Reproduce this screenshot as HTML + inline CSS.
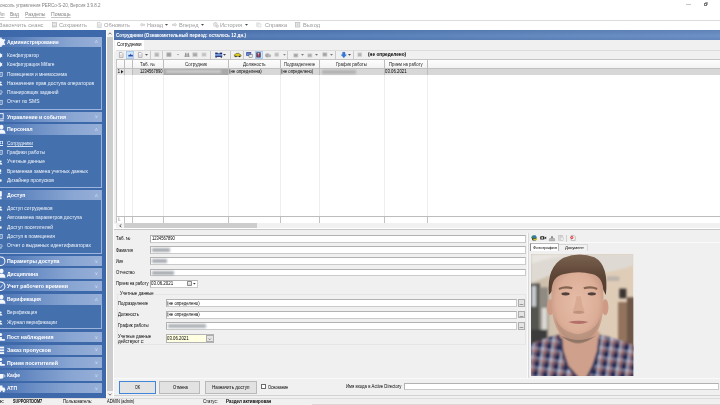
<!DOCTYPE html>
<html lang="ru"><head><meta charset="utf-8"><title>PERCo-S-20</title>
<style>
html,body{margin:0;padding:0;}
body{width:720px;height:405px;overflow:hidden;background:#fff;position:relative;font-family:"Liberation Sans", sans-serif;}
#app{position:absolute;left:0;top:0;width:720px;height:405px;overflow:hidden;}
#app div{position:absolute;box-sizing:border-box;}
#app span.t{position:absolute;white-space:nowrap;transform-origin:0 50%;line-height:1;display:block;}
#app svg{position:absolute;overflow:visible;}
</style></head><body><div id="app">
<div style="left:0px;top:19.5px;width:720px;height:1px;background:#dcdcdc;"></div>
<div style="left:686.3px;top:4px;width:4.4px;height:0.7px;background:#c4c4c4;"></div>
<div style="left:704.9px;top:1.9px;width:3.3px;height:3.2px;border:0.6px solid #aaa;"></div>
<div style="left:704px;top:2.7px;width:3.3px;height:3.3px;border:0.7px solid #7a7a7a;background:#fff;"></div>
<div style="left:0px;top:30px;width:105.9px;height:367.6px;background:#3d69aa;"></div>
<div style="left:105.9px;top:30px;width:8.5px;height:368px;background:#fff;"></div>
<div style="left:107.4px;top:30px;width:5.2px;height:368px;background:#f3f3f3;"></div>
<div style="left:107.4px;top:37px;width:5.2px;height:353.7px;background:#cdcdcd;"></div>
<div style="left:0px;top:47px;width:101.9px;height:62.599999999999994px;border:0.7px solid #9db5dc;border-left:none;border-top:none;background:#4470ae;"></div>
<div style="left:0px;top:36.65px;width:101.9px;height:10.4px;background:linear-gradient(90deg,#4b74b4 0%,#6c8fc5 35%,#89a5d2 70%,#96afd8 100%);"></div>
<div style="left:0px;top:111.5px;width:101.9px;height:10.4px;background:linear-gradient(90deg,#4b74b4 0%,#6c8fc5 35%,#89a5d2 70%,#96afd8 100%);"></div>
<div style="left:0px;top:134.6px;width:101.9px;height:53.099999999999994px;border:0.7px solid #9db5dc;border-left:none;border-top:none;background:#4470ae;"></div>
<div style="left:0px;top:124.2px;width:101.9px;height:10.4px;background:linear-gradient(90deg,#4b74b4 0%,#6c8fc5 35%,#89a5d2 70%,#96afd8 100%);"></div>
<div style="left:0px;top:200.4px;width:101.9px;height:53.29999999999998px;border:0.7px solid #9db5dc;border-left:none;border-top:none;background:#4470ae;"></div>
<div style="left:0px;top:189.95000000000002px;width:101.9px;height:10.4px;background:linear-gradient(90deg,#4b74b4 0%,#6c8fc5 35%,#89a5d2 70%,#96afd8 100%);"></div>
<div style="left:0px;top:255.85000000000002px;width:101.9px;height:10.4px;background:linear-gradient(90deg,#4b74b4 0%,#6c8fc5 35%,#89a5d2 70%,#96afd8 100%);"></div>
<div style="left:0px;top:268.45px;width:101.9px;height:10.4px;background:linear-gradient(90deg,#4b74b4 0%,#6c8fc5 35%,#89a5d2 70%,#96afd8 100%);"></div>
<div style="left:0px;top:281.0px;width:101.9px;height:10.4px;background:linear-gradient(90deg,#4b74b4 0%,#6c8fc5 35%,#89a5d2 70%,#96afd8 100%);"></div>
<div style="left:0px;top:304.6px;width:101.9px;height:24.899999999999977px;border:0.7px solid #9db5dc;border-left:none;border-top:none;background:#4470ae;"></div>
<div style="left:0px;top:294.25px;width:101.9px;height:10.4px;background:linear-gradient(90deg,#4b74b4 0%,#6c8fc5 35%,#89a5d2 70%,#96afd8 100%);"></div>
<div style="left:0px;top:331.8px;width:101.9px;height:10.4px;background:linear-gradient(90deg,#4b74b4 0%,#6c8fc5 35%,#89a5d2 70%,#96afd8 100%);"></div>
<div style="left:0px;top:344.5px;width:101.9px;height:10.4px;background:linear-gradient(90deg,#4b74b4 0%,#6c8fc5 35%,#89a5d2 70%,#96afd8 100%);"></div>
<div style="left:0px;top:357.40000000000003px;width:101.9px;height:10.4px;background:linear-gradient(90deg,#4b74b4 0%,#6c8fc5 35%,#89a5d2 70%,#96afd8 100%);"></div>
<div style="left:0px;top:370.2px;width:101.9px;height:10.4px;background:linear-gradient(90deg,#4b74b4 0%,#6c8fc5 35%,#89a5d2 70%,#96afd8 100%);"></div>
<div style="left:0px;top:383.05px;width:101.9px;height:10.4px;background:linear-gradient(90deg,#4b74b4 0%,#6c8fc5 35%,#89a5d2 70%,#96afd8 100%);"></div>
<svg style="left:108px;top:32.2px" width="4" height="3" viewBox="0 0 4 3"><path d="M0.5 2.4 L2 0.8 L3.5 2.4" fill="none" stroke="#555" stroke-width="0.8"/></svg>
<svg style="left:108px;top:393px" width="4" height="3" viewBox="0 0 4 3"><path d="M0.5 0.6 L2 2.2 L3.5 0.6" fill="none" stroke="#555" stroke-width="0.8"/></svg>
<div style="left:114.2px;top:30px;width:605.8px;height:9.8px;background:linear-gradient(180deg,rgba(0,0,0,.06),rgba(255,255,255,.05) 60%,rgba(0,0,0,.04)),linear-gradient(90deg,#4a71b0 0%,#577fba 50%,#668cc3 100%);"></div>
<div style="left:114.2px;top:39.8px;width:605.8px;height:9.8px;background:#f0f0f0;"></div>
<div style="left:114.6px;top:39.8px;width:29.6px;height:9.8px;background:#fff;"></div>
<div style="left:114.2px;top:49.5px;width:605.8px;height:10px;background:#f0f0f0;border-top:0.8px solid #fdfdfd;"></div>
<div style="left:116.2px;top:50.3px;width:603.8px;height:0.6px;background:#dcdcdc;"></div>
<div style="left:114.4px;top:59.4px;width:605.6px;height:165px;background:#f0f0f0;"></div>
<div style="left:116.2px;top:59.4px;width:603.8px;height:164.5px;background:#fff;"></div>
<div style="left:116.2px;top:59.4px;width:603.8px;height:9.2px;background:linear-gradient(180deg,#fdfdfd,#f3f3f3);border-top:0.7px solid #c4c4c4;border-bottom:0.7px solid #c0c0c0;"></div>
<div style="left:116.2px;top:68.6px;width:603.8px;height:6.3px;background:#d7d7d7;"></div>
<div style="left:116.2px;top:68.6px;width:16.2px;height:6.3px;background:#e4e4e4;"></div>
<div style="left:124.45px;top:59.8px;width:0.7px;height:163px;background:#eeeeee;"></div>
<div style="left:124.45px;top:215.6px;width:0.7px;height:7px;background:#c2c2c2;"></div>
<div style="left:124.45px;top:59.8px;width:0.7px;height:15px;background:#bdbdbd;"></div>
<div style="left:132.1px;top:59.8px;width:0.7px;height:163px;background:#eeeeee;"></div>
<div style="left:132.1px;top:215.6px;width:0.7px;height:7px;background:#c2c2c2;"></div>
<div style="left:132.1px;top:59.8px;width:0.7px;height:15px;background:#bdbdbd;"></div>
<div style="left:163.0px;top:59.8px;width:0.7px;height:163px;background:#eeeeee;"></div>
<div style="left:163.0px;top:215.6px;width:0.7px;height:7px;background:#c2c2c2;"></div>
<div style="left:163.0px;top:59.8px;width:0.7px;height:15px;background:#bdbdbd;"></div>
<div style="left:227.89999999999998px;top:59.8px;width:0.7px;height:163px;background:#eeeeee;"></div>
<div style="left:227.89999999999998px;top:215.6px;width:0.7px;height:7px;background:#c2c2c2;"></div>
<div style="left:227.89999999999998px;top:59.8px;width:0.7px;height:15px;background:#bdbdbd;"></div>
<div style="left:279.7px;top:59.8px;width:0.7px;height:163px;background:#eeeeee;"></div>
<div style="left:279.7px;top:215.6px;width:0.7px;height:7px;background:#c2c2c2;"></div>
<div style="left:279.7px;top:59.8px;width:0.7px;height:15px;background:#bdbdbd;"></div>
<div style="left:318.9px;top:59.8px;width:0.7px;height:163px;background:#eeeeee;"></div>
<div style="left:318.9px;top:215.6px;width:0.7px;height:7px;background:#c2c2c2;"></div>
<div style="left:318.9px;top:59.8px;width:0.7px;height:15px;background:#bdbdbd;"></div>
<div style="left:384.2px;top:59.8px;width:0.7px;height:163px;background:#eeeeee;"></div>
<div style="left:384.2px;top:215.6px;width:0.7px;height:7px;background:#c2c2c2;"></div>
<div style="left:384.2px;top:59.8px;width:0.7px;height:15px;background:#bdbdbd;"></div>
<div style="left:427.2px;top:59.8px;width:0.7px;height:163px;background:#eeeeee;"></div>
<div style="left:427.2px;top:215.6px;width:0.7px;height:7px;background:#c2c2c2;"></div>
<div style="left:427.2px;top:59.8px;width:0.7px;height:15px;background:#bdbdbd;"></div>
<svg style="left:121px;top:69.9px" width="2.4" height="3.4" viewBox="0 0 2.4 3.4"><path d="M0 0 L2.4 1.7 L0 3.4 Z" fill="#222"/></svg>
<div style="left:163.6px;top:68.6px;width:64.5px;height:6.3px;background:#a9a9a9;"></div>
<div style="left:166px;top:70.3px;width:55px;height:3.2px;background:#d6d6d6;filter:blur(0.9px);opacity:.8;"></div>
<div style="left:322px;top:69.8px;width:34px;height:4px;background:#a3a3a3;filter:blur(1.3px);opacity:.7;"></div>
<div style="left:116.2px;top:215.5px;width:603.8px;height:0.7px;background:#bcbcbc;"></div>
<div style="left:116.1px;top:59.4px;width:0.6px;height:169px;background:#c6c6c6;"></div>
<div style="left:116.2px;top:222.7px;width:603.8px;height:5.8px;background:#f1f1f1;"></div>
<div style="left:124.2px;top:222.9px;width:132.8px;height:5.4px;background:#cdcdcd;"></div>
<svg style="left:118.6px;top:223.9px" width="3" height="3.6" viewBox="0 0 3 3.6"><path d="M2.4 0.4 L0.7 1.8 L2.4 3.2" fill="none" stroke="#333" stroke-width="0.8"/></svg>
<div style="left:114.4px;top:228.6px;width:605.6px;height:1.2px;background:#c6c6c6;"></div>
<div style="left:114.4px;top:229.8px;width:605.6px;height:3px;background:#f4f4f4;"></div>
<div style="left:114.4px;top:232.6px;width:605.6px;height:0.7px;background:#dadada;"></div>
<div style="left:114.4px;top:229.8px;width:605.6px;height:168.2px;background:#f0f0f0;"></div>
<div style="left:149.8px;top:235.1px;width:375.8px;height:7.6px;background:#fff;border:0.7px solid #cacaca;border-top-color:#b2b2b2;border-left-color:#b2b2b2;"></div>
<div style="left:149.8px;top:246.29999999999998px;width:375.8px;height:7.6px;background:#fff;border:0.7px solid #cacaca;border-top-color:#b2b2b2;border-left-color:#b2b2b2;"></div>
<div style="left:152px;top:248px;width:18px;height:4.2px;background:#8f949c;filter:blur(1.1px);opacity:.75;"></div>
<div style="left:149.8px;top:257.4px;width:375.8px;height:7.6px;background:#fff;border:0.7px solid #cacaca;border-top-color:#b2b2b2;border-left-color:#b2b2b2;"></div>
<div style="left:152px;top:259.2px;width:15px;height:4.2px;background:#8f949c;filter:blur(1.1px);opacity:.75;"></div>
<div style="left:149.8px;top:268.79999999999995px;width:375.8px;height:7.6px;background:#fff;border:0.7px solid #cacaca;border-top-color:#b2b2b2;border-left-color:#b2b2b2;"></div>
<div style="left:152px;top:270.6px;width:22px;height:4.2px;background:#8f949c;filter:blur(1.1px);opacity:.75;"></div>
<div style="left:149.8px;top:279.75px;width:48.0px;height:7.9px;background:#fff;border:0.7px solid #cacaca;border-top-color:#b2b2b2;border-left-color:#b2b2b2;"></div>
<div style="left:187.4px;top:280.9px;width:4.2px;height:5.6px;background:linear-gradient(180deg,#f4f4f4,#d4d4d4);border:0.6px solid #8a8a8a;border-radius:0.8px;"></div>
<svg style="left:193.05px;top:283.28px" width="2.7" height="1.62" viewBox="0 0 3 1.8"><path d="M0 0 L3 0 L1.5 1.8 Z" fill="#333"/></svg>
<div style="left:116.7px;top:293.5px;width:409.5px;height:51.8px;border:0.6px solid #e6e6e6;"></div>
<div style="left:119.5px;top:291px;width:35.5px;height:5px;background:#f0f0f0;"></div>
<div style="left:165.9px;top:299.2px;width:351px;height:8px;background:#fff;border:0.7px solid #cacaca;border-top-color:#b2b2b2;border-left-color:#b2b2b2;"></div>
<div style="left:517.7px;top:299.4px;width:7.4px;height:7.6px;background:#e4e4e4;border:0.6px solid #adadad;"></div>
<div style="left:165.9px;top:310.6px;width:351px;height:8px;background:#fff;border:0.7px solid #cacaca;border-top-color:#b2b2b2;border-left-color:#b2b2b2;"></div>
<div style="left:517.7px;top:310.8px;width:7.4px;height:7.6px;background:#e4e4e4;border:0.6px solid #adadad;"></div>
<div style="left:165.9px;top:321.9px;width:351px;height:8px;background:#fff;border:0.7px solid #cacaca;border-top-color:#b2b2b2;border-left-color:#b2b2b2;"></div>
<div style="left:517.7px;top:322.09999999999997px;width:7.4px;height:7.6px;background:#e4e4e4;border:0.6px solid #adadad;"></div>
<div style="left:167.5px;top:323.8px;width:38px;height:4.2px;background:#8f949c;filter:blur(1.1px);opacity:.7;"></div>
<div style="left:165.9px;top:334.4px;width:48.1px;height:8.3px;background:#ffffe1;border:0.7px solid #b4b4b4;"></div>
<div style="left:206.1px;top:334.9px;width:7.5px;height:7.3px;background:#e4e4e4;border:0.6px solid #adadad;"></div>
<svg style="left:208.2px;top:337.7px" width="3.4" height="2.4" viewBox="0 0 3.4 2.4"><path d="M0.4 0.5 L1.7 1.8 L3 0.5" fill="none" stroke="#555" stroke-width="0.6"/></svg>
<div style="left:527.2px;top:233px;width:0.6px;height:145px;background:#fbfbfb;"></div>
<div style="left:527.8px;top:233px;width:0.6px;height:145px;background:#d9d9d9;"></div>
<div style="left:530.4px;top:243.1px;width:29px;height:8.2px;background:#fff;border:0.7px solid #b9b9b9;border-left-color:#8c8c8c;border-bottom:none;"></div>
<div style="left:559.4px;top:244px;width:29px;height:7.3px;border:0.6px solid #d8d8d8;border-left:none;border-bottom:none;background:#f1f1f1;"></div>
<div style="left:528.5px;top:242.3px;width:191.5px;height:0.6px;background:#fafafa;"></div>
<div style="left:114.4px;top:377.6px;width:605.6px;height:0.7px;background:#dadada;"></div>
<div style="left:114.4px;top:378.3px;width:605.6px;height:0.6px;background:#fafafa;"></div>
<div style="left:118.7px;top:380.6px;width:37.5px;height:13.2px;background:#e3e3e3;border:1px solid #3f86d8;"></div>
<div style="left:159.4px;top:380.6px;width:41.1px;height:13.2px;background:#e2e2e2;border:0.7px solid #b9b9b9;"></div>
<div style="left:204.5px;top:380.6px;width:52px;height:13.2px;background:#e2e2e2;border:0.7px solid #b9b9b9;"></div>
<div style="left:261px;top:384.2px;width:5px;height:5.2px;background:#fff;border:0.6px solid #6a6a6a;"></div>
<div style="left:404.4px;top:382.6px;width:314.6px;height:7.8px;background:#fff;border:0.7px solid #cacaca;border-top-color:#b2b2b2;border-left-color:#b2b2b2;"></div>
<div style="left:114.2px;top:395.2px;width:605.8px;height:0.7px;background:#d2d2d2;"></div>
<div style="left:0px;top:398px;width:720px;height:7px;background:#f0f0f0;border-top:0.6px solid #dcdcdc;"></div>
<div style="left:312px;top:404.3px;width:408px;height:0.7px;background:#e0d6d6;"></div>
<svg style="left:51.8px;top:22.3px" width="5" height="5.4" viewBox="0 0 5 5.4"><rect x="0.4" y="0.4" width="4.2" height="4.6" fill="#f2f2f2" stroke="#b9b9b9" stroke-width="0.7"/><rect x="1.3" y="0.6" width="2.4" height="1.6" fill="#d9d9d9"/><rect x="1.2" y="3.2" width="2.6" height="1.6" fill="#cfcfcf"/></svg>
<svg style="left:97.2px;top:22.1px" width="4.6" height="5.8" viewBox="0 0 4.6 5.8"><path d="M0.4 0.4 H3 L4.2 1.6 V5.4 H0.4 Z" fill="#f6f6f6" stroke="#b9b9b9" stroke-width="0.6"/><path d="M1.2 2.4 H3.4 M1.2 3.4 H3.4 M1.2 4.4 H3.4" stroke="#cfcfcf" stroke-width="0.5"/></svg>
<svg style="left:139.5px;top:23.2px" width="5" height="3.6" viewBox="0 0 5 3.6"><path d="M0.3 1.8 L2 0.3 V1.2 H4.7 V2.4 H2 V3.3 Z" fill="#e9e9e9" stroke="#b9b9b9" stroke-width="0.5"/></svg>
<svg style="left:165.2px;top:24.2px" width="3.0" height="1.8" viewBox="0 0 3 1.8"><path d="M0 0 L3 0 L1.5 1.8 Z" fill="#444"/></svg>
<svg style="left:172px;top:23.2px" width="5" height="3.6" viewBox="0 0 5 3.6"><path d="M4.7 1.8 L3 0.3 V1.2 H0.3 V2.4 H3 V3.3 Z" fill="#e9e9e9" stroke="#b9b9b9" stroke-width="0.5"/></svg>
<svg style="left:200.8px;top:24.2px" width="3.0" height="1.8" viewBox="0 0 3 1.8"><path d="M0 0 L3 0 L1.5 1.8 Z" fill="#444"/></svg>
<svg style="left:212.6px;top:22.2px" width="5.6" height="5.6" viewBox="0 0 5.6 5.6"><circle cx="2.4" cy="2.4" r="1.9" fill="#f4f4f4" stroke="#b9b9b9" stroke-width="0.6"/><path d="M2.4 1.3 V2.5 H3.3" stroke="#b9b9b9" stroke-width="0.5" fill="none"/><rect x="3" y="3.3" width="2.3" height="2" fill="#e4e4e4" stroke="#b9b9b9" stroke-width="0.4"/></svg>
<svg style="left:244.5px;top:24.2px" width="3.0" height="1.8" viewBox="0 0 3 1.8"><path d="M0 0 L3 0 L1.5 1.8 Z" fill="#444"/></svg>
<svg style="left:256.2px;top:22.4px" width="5.4" height="5.2" viewBox="0 0 5.4 5.2"><path d="M0.4 0.8 H3.2 V4.4 H0.4 Z" fill="#f1f1f1" stroke="#d0d0d0" stroke-width="0.5"/><path d="M2 1.8 H5 V5 H2 Z" fill="#f6f6f6" stroke="#cccccc" stroke-width="0.5"/></svg>
<svg style="left:295.2px;top:22.3px" width="5.2" height="5.4" viewBox="0 0 5.2 5.4"><rect x="0.4" y="0.4" width="4.4" height="4.6" fill="#f0f0f0" stroke="#b9b9b9" stroke-width="0.7"/><rect x="1.6" y="1.2" width="2" height="3" fill="#d5d5d5"/></svg>
<svg style="left:119.3px;top:52.0px" width="4.4" height="5.8" viewBox="0 0 4.4 5.8"><path d="M0.4 0.4 H2.8 L4 1.6 V5.4 H0.4 Z" fill="#fafafa" stroke="#8a8a8a" stroke-width="0.6"/><path d="M1.2 3 H3.2 M1.2 4.1 H3.2" stroke="#a5a5a5" stroke-width="0.5"/></svg>
<div style="left:126.2px;top:50.6px;width:8.2px;height:8.6px;background:#d3e6f7;border:0.5px solid #a9cbee;"></div>
<svg style="left:127.8px;top:52.8px" width="5.2" height="4" viewBox="0 0 5.2 4"><path d="M0.3 3.2 L0.3 2.2 L1.2 1.4 L1.9 2.2 L2.8 0.5 L3.6 2.2 L4.2 1.4 L4.9 2.4 V3.2 Z" fill="#2446a4"/><path d="M0.2 3.7 H5" stroke="#3a5cb8" stroke-width="0.4"/></svg>
<svg style="left:138.0px;top:52.0px" width="4.4" height="5.8" viewBox="0 0 4.4 5.8"><path d="M0.4 0.4 H2.8 L4 1.6 V5.4 H0.4 Z" fill="#fafafa" stroke="#8a8a8a" stroke-width="0.6"/><path d="M1.2 3 H3.2 M1.2 4.1 H3.2" stroke="#a5a5a5" stroke-width="0.5"/></svg>
<svg style="left:145.2px;top:54.1px" width="3.0" height="1.8" viewBox="0 0 3 1.8"><path d="M0 0 L3 0 L1.5 1.8 Z" fill="#555"/></svg>
<div style="left:150.29999999999998px;top:51px;width:0.7px;height:8px;background:#c9c9c9;"></div>
<svg style="left:153.89999999999998px;top:52.199999999999996px" width="5.6" height="5.4" viewBox="0 0 5.6 5.4"><rect x="0.3" y="0.3" width="5.0" height="4.800000000000001" rx="0.6" fill="#d2d2d2"/><rect x="1.1199999999999999" y="1.35" width="3.36" height="2.7" fill="#b5b5b5"/></svg>
<div style="left:161.79999999999998px;top:51px;width:0.7px;height:8px;background:#c9c9c9;"></div>
<svg style="left:165.7px;top:52.3px" width="5.8" height="5.2" viewBox="0 0 5.8 5.2"><rect x="0.3" y="0.3" width="5.2" height="4.6000000000000005" rx="0.6" fill="#bdbdbd"/><rect x="1.16" y="1.3" width="3.48" height="2.6" fill="#9f9f9f"/></svg>
<svg style="left:176.64999999999998px;top:54.339999999999996px" width="2.0999999999999996" height="1.26" viewBox="0 0 3 1.8"><path d="M0 0 L3 0 L1.5 1.8 Z" fill="#8a8a8a"/></svg>
<svg style="left:183.9px;top:52.3px" width="6" height="5.2" viewBox="0 0 6 5.2"><path d="M0.5 5 L1.2 0.8 H2.4 L2.8 5 Z M3.2 5 L3.6 0.8 H4.8 L5.5 5 Z" fill="#9a9a9a"/><rect x="2.4" y="2" width="1.2" height="1.2" fill="#a8a8a8"/></svg>
<svg style="left:192.2px;top:52.199999999999996px" width="6" height="5.4" viewBox="0 0 6 5.4"><rect x="0.3" y="0.3" width="5.4" height="4.800000000000001" rx="0.6" fill="#cfcfcf"/><rect x="1.2000000000000002" y="1.35" width="3.5999999999999996" height="2.7" fill="#a9a9a9"/></svg>
<svg style="left:201.4px;top:52.3px" width="6" height="5.2" viewBox="0 0 6 5.2"><rect x="0.3" y="0.3" width="5.4" height="4.6000000000000005" rx="0.6" fill="#dedede"/><rect x="1.2000000000000002" y="1.3" width="3.5999999999999996" height="2.6" fill="#c2c2c2"/></svg>
<div style="left:210.29999999999998px;top:51px;width:0.7px;height:8px;background:#c9c9c9;"></div>
<svg style="left:214.8px;top:51.9px" width="7.4" height="6" viewBox="0 0 7.4 6"><rect x="0.2" y="0.6" width="7" height="1.5" fill="#1e2d6e"/><rect x="0.2" y="2.1" width="7" height="1.6" fill="#5f8fe0"/><rect x="0.2" y="3.7" width="7" height="1.2" fill="#1e2d6e"/><rect x="0.6" y="4.9" width="1" height="1" fill="#1e2d6e"/><rect x="5.8" y="4.9" width="1" height="1" fill="#1e2d6e"/><rect x="2.6" y="0" width="2.2" height="1.4" fill="#e9eefc"/></svg>
<svg style="left:223.1px;top:54.1px" width="3.0" height="1.8" viewBox="0 0 3 1.8"><path d="M0 0 L3 0 L1.5 1.8 Z" fill="#444"/></svg>
<div style="left:229.7px;top:51px;width:0.7px;height:8px;background:#c9c9c9;"></div>
<svg style="left:234px;top:52.9px" width="7.4" height="4.4" viewBox="0 0 7.4 4.4"><path d="M0.4 3.3 V2.1 Q0.6 1.4 1.5 1.2 L2.3 0.4 H4.8 L5.9 1.3 Q7 1.6 7 2.5 V3.3 Z" fill="#e6d01e" stroke="#4a4410" stroke-width="0.6"/><circle cx="1.9" cy="3.5" r="0.8" fill="#2b2b2b"/><circle cx="5.5" cy="3.5" r="0.8" fill="#2b2b2b"/></svg>
<div style="left:243.39999999999998px;top:51px;width:0.7px;height:8px;background:#c9c9c9;"></div>
<svg style="left:246.2px;top:52.1px" width="6.6" height="5.8" viewBox="0 0 6.6 5.8"><rect x="0.2" y="0.2" width="5" height="3.6" fill="#2b3f8f"/><rect x="0.6" y="1.2" width="4.2" height="2.2" fill="#6c8fe0"/><rect x="3" y="2.8" width="3.2" height="2.8" fill="#e8e8e8" stroke="#555" stroke-width="0.4"/></svg>
<div style="left:255px;top:50.6px;width:7.6px;height:8.6px;background:#d3e6f7;border:0.5px solid #a9cbee;"></div>
<svg style="left:256.4px;top:52.1px" width="5" height="5.8" viewBox="0 0 5 5.8"><rect x="0.3" y="0.3" width="4.4" height="5.2" fill="#343a60"/><rect x="1.6" y="1" width="1.8" height="3.8" fill="#d9485a"/><circle cx="2.5" cy="1.8" r="0.8" fill="#f2c4c8"/></svg>
<svg style="left:264.5px;top:52.5px" width="6.4" height="5" viewBox="0 0 6.4 5"><ellipse cx="2.4" cy="2.4" rx="2.3" ry="2.1" fill="#a9a9a9"/><ellipse cx="4.6" cy="2.8" rx="1.6" ry="1.5" fill="#b9b9b9"/></svg>
<svg style="left:274.2px;top:52.3px" width="5.4" height="5.2" viewBox="0 0 5.4 5.2"><rect x="0.3" y="0.3" width="4.800000000000001" height="4.6000000000000005" rx="0.6" fill="#d9d9d9"/><rect x="1.08" y="1.3" width="3.24" height="2.6" fill="#bcbcbc"/></svg>
<svg style="left:282.9px;top:54.1px" width="3.0" height="1.8" viewBox="0 0 3 1.8"><path d="M0 0 L3 0 L1.5 1.8 Z" fill="#8a8a8a"/></svg>
<div style="left:286.59999999999997px;top:51px;width:0.7px;height:8px;background:#c9c9c9;"></div>
<svg style="left:292.8px;top:52.5px" width="5.6" height="4.8" viewBox="0 0 5.6 4.8"><rect x="0.3" y="0.3" width="5.0" height="4.2" rx="0.6" fill="#cdcdcd"/><rect x="1.1199999999999999" y="1.2" width="3.36" height="2.4" fill="#a5a5a5"/></svg>
<svg style="left:300.6px;top:54.1px" width="3.0" height="1.8" viewBox="0 0 3 1.8"><path d="M0 0 L3 0 L1.5 1.8 Z" fill="#777"/></svg>
<svg style="left:307.2px;top:52.5px" width="5.6" height="4.8" viewBox="0 0 5.6 4.8"><rect x="0.3" y="0.3" width="5.0" height="4.2" rx="0.6" fill="#d4d4d4"/><rect x="1.1199999999999999" y="1.2" width="3.36" height="2.4" fill="#adadad"/></svg>
<svg style="left:315.1px;top:54.1px" width="3.0" height="1.8" viewBox="0 0 3 1.8"><path d="M0 0 L3 0 L1.5 1.8 Z" fill="#777"/></svg>
<svg style="left:321.59999999999997px;top:52.4px" width="5.6" height="5" viewBox="0 0 5.6 5"><rect x="0.3" y="0.3" width="5.0" height="4.4" rx="0.6" fill="#c9c9c9"/><rect x="1.1199999999999999" y="1.25" width="3.36" height="2.5" fill="#a3a3a3"/></svg>
<svg style="left:330.0px;top:54.1px" width="3.0" height="1.8" viewBox="0 0 3 1.8"><path d="M0 0 L3 0 L1.5 1.8 Z" fill="#777"/></svg>
<div style="left:335.3px;top:51px;width:0.7px;height:8px;background:#c9c9c9;"></div>
<svg style="left:340.7px;top:51.9px" width="5.6" height="6" viewBox="0 0 5.6 6"><path d="M1.6 0.3 H4 V2.8 H5.4 L2.8 5.7 L0.2 2.8 H1.6 Z" fill="#2f7be0" stroke="#1d55a8" stroke-width="0.35"/></svg>
<svg style="left:347.9px;top:54.1px" width="3.0" height="1.8" viewBox="0 0 3 1.8"><path d="M0 0 L3 0 L1.5 1.8 Z" fill="#444"/></svg>
<div style="left:353.4px;top:51px;width:0.7px;height:8px;background:#c9c9c9;"></div>
<svg style="left:356.7px;top:52.199999999999996px" width="5.4" height="5.4" viewBox="0 0 5.4 5.4"><rect x="0.3" y="0.3" width="4.800000000000001" height="4.800000000000001" rx="0.6" fill="#d6d6d6"/><rect x="1.08" y="1.35" width="3.24" height="2.7" fill="#b3b3b3"/></svg>
<svg style="left:531px;top:235.29999999999998px" width="7" height="5.8" viewBox="0 0 7 5.8"><ellipse cx="3" cy="2.2" rx="2.6" ry="1.9" fill="#2f8f5a"/><ellipse cx="3.6" cy="1.6" rx="1.6" ry="1.1" fill="#3c6fd0"/><path d="M0.8 3.2 H5.6 L4.8 5.4 H1.6 Z" fill="#2c2c2c"/><path d="M2 3.8 H6.6 L5.4 5.2 H2.6 Z" fill="#d9c22e"/></svg>
<svg style="left:540px;top:236.2px" width="6.4" height="3.8" viewBox="0 0 6.4 3.8"><rect x="0.2" y="0.3" width="4.2" height="3.2" rx="0.6" fill="#2a2a2a"/><path d="M4.4 1.9 L6.2 0.5 V3.3 Z" fill="#2a2a2a"/><circle cx="2.2" cy="1.9" r="0.9" fill="#e8e8e8"/></svg>
<svg style="left:549.2px;top:235.5px" width="6" height="5.2" viewBox="0 0 6 5.2"><path d="M2 0.3 H4 V2.4 H2 Z" fill="#8d8d8d"/><path d="M0.6 2.4 H5.4 L5.8 4.8 H0.2 Z" fill="#b9b9b9" stroke="#7f7f7f" stroke-width="0.4"/></svg>
<svg style="left:558.2px;top:235.29999999999998px" width="5.8" height="5.6" viewBox="0 0 5.8 5.6"><rect x="0.3" y="0.8" width="4.6" height="4.6" fill="#d9d9d9" stroke="#bdbdbd" stroke-width="0.4"/><rect x="1.6" y="0.2" width="2" height="1.2" fill="#bfbfbf"/><rect x="2.4" y="2.2" width="3" height="3" fill="#ececec" stroke="#c2c2c2" stroke-width="0.4"/></svg>
<div style="left:566.2px;top:234.5px;width:0.7px;height:7.5px;background:#cfcfcf;"></div>
<svg style="left:570px;top:235.2px" width="5.6" height="5.8" viewBox="0 0 5.6 5.8"><path d="M1.2 0.4 H4 L5.2 1.6 V5.4 H1.2 Z" fill="#fbf6ee" stroke="#8c8c8c" stroke-width="0.5"/><circle cx="1.9" cy="2.4" r="1.5" fill="#d8262f"/><path d="M1.2 2.4 H2.6 M1.9 1.7 V3.1" stroke="#fff" stroke-width="0.5"/></svg>
<svg style="left:530.8px;top:253.9px" width="102.4" height="121.9" viewBox="0 0 320 380" preserveAspectRatio="none">
<defs>
<filter id="pb" x="-5%" y="-5%" width="110%" height="110%"><feGaussianBlur stdDeviation="3.2"/></filter>
<filter id="pb2" x="-5%" y="-5%" width="110%" height="110%"><feGaussianBlur stdDeviation="2.4"/></filter>
<linearGradient id="wall" x1="0" y1="0" x2="1" y2="0"><stop offset="0" stop-color="#c9bba8"/><stop offset="0.5" stop-color="#dccbb7"/><stop offset="1" stop-color="#e0cdb8"/></linearGradient>
<radialGradient id="skin" cx="0.5" cy="0.42" r="0.62"><stop offset="0" stop-color="#e6bda8"/><stop offset="0.65" stop-color="#dcae98"/><stop offset="1" stop-color="#bd8e7a"/></radialGradient>
<linearGradient id="hair" x1="0" y1="0" x2="0" y2="1"><stop offset="0" stop-color="#7a6250"/><stop offset="0.5" stop-color="#5e4636"/><stop offset="1" stop-color="#4f3a2e"/></linearGradient>
<pattern id="plaid" width="30" height="30" patternUnits="userSpaceOnUse" patternTransform="rotate(8)"><rect width="30" height="30" fill="#3b4778"/><rect x="0" y="0" width="10" height="30" fill="#1f2850"/><rect x="0" y="0" width="30" height="9" fill="#222b56" opacity="0.8"/><rect x="15" y="0" width="5" height="30" fill="#f1eef0" opacity="0.75"/><rect x="0" y="16" width="30" height="4.5" fill="#eceaf0" opacity="0.6"/><rect x="24" y="0" width="3" height="30" fill="#e58a62" opacity="0.85"/><rect x="0" y="25" width="30" height="2.6" fill="#e58a62" opacity="0.8"/></pattern>
<clipPath id="pc"><rect x="0" y="0" width="320" height="380"/></clipPath>
</defs>
<g clip-path="url(#pc)">
<rect width="320" height="380" fill="url(#wall)"/>
<g filter="url(#pb)">
<path d="M0 0 H320 V36 Q250 58 200 62 L60 66 L0 92 Z" fill="#dedad3"/>
<path d="M0 30 L70 10 L150 4 L150 0 L0 0 Z" fill="#e9e6e1"/>
<rect x="-10" y="92" width="38" height="210" fill="#55544f"/>
<rect x="26" y="104" width="28" height="196" fill="#8f8b83"/>
<rect x="2" y="100" width="14" height="64" fill="#c8ccd0"/>
<rect x="34" y="168" width="16" height="92" fill="#dad8d2"/>
<rect x="0" y="236" width="50" height="56" fill="#3b3a3a"/>
<rect x="272" y="150" width="30" height="150" fill="#93735d"/>
<rect x="300" y="135" width="24" height="170" fill="#6d5446"/>
<rect x="276" y="108" width="22" height="30" fill="#3a3532"/>
<rect x="236" y="70" width="40" height="14" fill="#bcb4aa"/>
</g>
<g filter="url(#pb)">
<path d="M-10 392 V284 Q40 262 100 248 L150 296 L208 250 Q270 262 330 288 V392 Z" fill="url(#plaid)"/>
<path d="M88 240 L214 240 L212 300 L196 350 L174 386 L148 386 L112 350 L96 300 Z" fill="#cfa18c"/><path d="M94 262 L98 302 L114 350 L148 388" fill="none" stroke="#2a3158" stroke-width="7"/><path d="M214 262 L210 302 L194 350 L174 388" fill="none" stroke="#2a3158" stroke-width="7"/>
</g>
<g filter="url(#pb2)">
<path d="M56 128 Q48 40 102 12 Q150 -8 198 10 Q244 34 234 128 L224 108 Q218 72 190 64 Q150 56 102 68 Q76 78 68 112 Z" fill="url(#hair)"/>
<ellipse cx="60" cy="166" rx="10" ry="25" fill="#cf9a85"/>
<ellipse cx="232" cy="166" rx="10" ry="25" fill="#cf9a85"/>
<path d="M64 120 Q64 68 104 62 Q150 52 190 62 Q228 70 226 124 Q230 190 212 232 Q184 280 146 280 Q106 278 80 232 Q60 188 64 120 Z" fill="url(#skin)"/>
<path d="M74 196 Q86 262 146 282 Q206 262 218 196 Q200 244 146 250 Q92 244 74 196 Z" fill="#a98876" opacity="0.55"/><path d="M92 254 Q146 300 204 254 Q150 282 92 254 Z" fill="#7d685c" opacity="0.7"/>
<path d="M86 106 Q108 96 130 104 L128 110 Q106 104 88 112 Z" fill="#86644f"/>
<path d="M164 104 Q188 96 208 106 L206 112 Q188 104 166 110 Z" fill="#86644f"/>
<ellipse cx="108" cy="124" rx="13" ry="5" fill="#51403a"/>
<ellipse cx="190" cy="124" rx="13" ry="5" fill="#51403a"/>
<path d="M142 132 Q136 168 130 178 Q148 190 168 178 Q160 166 156 132 Z" fill="#d3a28c" opacity="0.7"/>
<ellipse cx="149" cy="182" rx="18" ry="5" fill="#b58472" opacity="0.7"/>
<path d="M116 212 Q148 204 180 212 Q150 224 116 212 Z" fill="#b3706a"/>
</g>
</g>
</svg>
<svg style="left:-0.6px;top:52.8px" width="4" height="5" viewBox="0 0 4 5"><circle cx="1.4" cy="2.5" r="1.7" fill="#f4f7fc"/><circle cx="1.4" cy="2.5" r="0.6" fill="#3c67a8"/><path d="M1.4 0.2 V4.8 M-0.6 1.3 L3.4 3.7 M-0.6 3.7 L3.4 1.3" stroke="#f4f7fc" stroke-width="0.7"/></svg>
<svg style="left:-0.6px;top:62.2px" width="4" height="5" viewBox="0 0 4 5"><circle cx="1.4" cy="2.5" r="1.7" fill="#f4f7fc"/><circle cx="1.4" cy="2.5" r="0.6" fill="#3c67a8"/><path d="M1.4 0.2 V4.8 M-0.6 1.3 L3.4 3.7 M-0.6 3.7 L3.4 1.3" stroke="#f4f7fc" stroke-width="0.7"/></svg>
<svg style="left:-0.6px;top:71.7px" width="4" height="5" viewBox="0 0 4 5"><rect x="0" y="0.6" width="3.2" height="3.8" fill="none" stroke="#f4f7fc" stroke-width="0.6"/><path d="M0.8 1.9 H2.4 M0.8 3 H2.4" stroke="#f4f7fc" stroke-width="0.45"/></svg>
<svg style="left:-0.6px;top:80.8px" width="4" height="5" viewBox="0 0 4 5"><circle cx="1.6" cy="1.5" r="1" fill="#f4f7fc"/><path d="M-0.2 4.6 Q0 2.7 1.6 2.7 Q3.2 2.7 3.4 4.6 Z" fill="#f4f7fc"/></svg>
<svg style="left:-0.6px;top:90.2px" width="4" height="5" viewBox="0 0 4 5"><rect x="0" y="0.8" width="3" height="2.4" rx="0.5" fill="none" stroke="#f4f7fc" stroke-width="0.6"/><path d="M0.6 4.2 H2.6" stroke="#f4f7fc" stroke-width="0.6"/></svg>
<svg style="left:-0.6px;top:99.5px" width="4" height="5" viewBox="0 0 4 5"><rect x="0" y="0.6" width="3.2" height="3.8" fill="none" stroke="#f4f7fc" stroke-width="0.6"/><path d="M0.8 1.9 H2.4 M0.8 3 H2.4" stroke="#f4f7fc" stroke-width="0.45"/></svg>
<div style="left:-0.5px;top:140.8px;width:3.8px;height:5.2px;background:#bcd4f0;border:0.5px solid #e6effa;"></div>
<svg style="left:-0.4px;top:141.3px" width="3.6" height="4.4" viewBox="0 0 3.6 4.4"><circle cx="1.4" cy="1.4" r="0.9" fill="#2f5fb0"/><path d="M0 4 Q0.2 2.4 1.4 2.4 Q2.8 2.4 3 4 Z" fill="#2f5fb0"/></svg>
<svg style="left:-0.6px;top:150.0px" width="4" height="5" viewBox="0 0 4 5"><rect x="0" y="0.6" width="3.2" height="3.8" fill="none" stroke="#f4f7fc" stroke-width="0.6"/><path d="M0.8 1.9 H2.4 M0.8 3 H2.4" stroke="#f4f7fc" stroke-width="0.45"/></svg>
<svg style="left:-0.6px;top:159.5px" width="4" height="5" viewBox="0 0 4 5"><circle cx="1.6" cy="1.5" r="1" fill="#f4f7fc"/><path d="M-0.2 4.6 Q0 2.7 1.6 2.7 Q3.2 2.7 3.4 4.6 Z" fill="#f4f7fc"/></svg>
<svg style="left:-0.6px;top:168.9px" width="4" height="5" viewBox="0 0 4 5"><rect x="1" y="0.3" width="1.2" height="2.8" rx="0.5" fill="#f4f7fc"/><rect x="1" y="3.6" width="1.2" height="1.1" fill="#f4f7fc"/></svg>
<svg style="left:-0.6px;top:177.8px" width="4" height="5" viewBox="0 0 4 5"><rect x="-0.4" y="1.4" width="3" height="2.2" fill="#f4f7fc"/></svg>
<svg style="left:-0.6px;top:205.8px" width="4" height="5" viewBox="0 0 4 5"><circle cx="1.6" cy="1.5" r="1" fill="#f4f7fc"/><path d="M-0.2 4.6 Q0 2.7 1.6 2.7 Q3.2 2.7 3.4 4.6 Z" fill="#f4f7fc"/></svg>
<svg style="left:-0.6px;top:215.5px" width="4" height="5" viewBox="0 0 4 5"><rect x="1" y="0.3" width="1.2" height="2.8" rx="0.5" fill="#f4f7fc"/><rect x="1" y="3.6" width="1.2" height="1.1" fill="#f4f7fc"/></svg>
<svg style="left:-0.6px;top:224.8px" width="4" height="5" viewBox="0 0 4 5"><rect x="-0.4" y="1.4" width="3" height="2.2" fill="#f4f7fc"/></svg>
<svg style="left:-0.6px;top:233.9px" width="4" height="5" viewBox="0 0 4 5"><rect x="0" y="0.6" width="3.2" height="3.8" fill="none" stroke="#f4f7fc" stroke-width="0.6"/><path d="M0.8 1.9 H2.4 M0.8 3 H2.4" stroke="#f4f7fc" stroke-width="0.45"/></svg>
<svg style="left:-0.6px;top:243.5px" width="4" height="5" viewBox="0 0 4 5"><rect x="0" y="0.8" width="3" height="2.4" rx="0.5" fill="none" stroke="#f4f7fc" stroke-width="0.6"/><path d="M0.6 4.2 H2.6" stroke="#f4f7fc" stroke-width="0.6"/></svg>
<svg style="left:-0.6px;top:310.5px" width="4" height="5" viewBox="0 0 4 5"><circle cx="1.6" cy="1.5" r="1" fill="#f4f7fc"/><path d="M-0.2 4.6 Q0 2.7 1.6 2.7 Q3.2 2.7 3.4 4.6 Z" fill="#f4f7fc"/></svg>
<svg style="left:-0.6px;top:319.8px" width="4" height="5" viewBox="0 0 4 5"><circle cx="1.6" cy="1.5" r="1" fill="#f4f7fc"/><path d="M-0.2 4.6 Q0 2.7 1.6 2.7 Q3.2 2.7 3.4 4.6 Z" fill="#f4f7fc"/></svg>
<svg style="left:-0.8px;top:36.65px" width="8.2" height="10.4" viewBox="0 0 7 9"><circle cx="1.6" cy="4.5" r="3" fill="#f4f7fc"/><circle cx="1.6" cy="4.5" r="1.1" fill="#4b74b4"/><path d="M1.6 0.4 V8.6 M-2 2.4 L5.2 6.6 M-2 6.6 L5.2 2.4" stroke="#f4f7fc" stroke-width="1.3"/></svg>
<svg style="left:-0.8px;top:111.5px" width="8.2" height="10.4" viewBox="0 0 7 9"><rect x="-1" y="1.4" width="4.6" height="4.6" fill="none" stroke="#f4f7fc" stroke-width="0.8"/><path d="M0 7.6 H4" stroke="#f4f7fc" stroke-width="0.8"/></svg>
<svg style="left:-0.8px;top:124.2px" width="8.2" height="10.4" viewBox="0 0 7 9"><circle cx="2" cy="2.6" r="1.9" fill="#f4f7fc"/><path d="M-1.5 8.4 Q-1.2 4.8 2 4.8 Q5.4 4.8 5.6 8.4 Z" fill="#f4f7fc"/></svg>
<svg style="left:-0.8px;top:189.95000000000002px" width="8.2" height="10.4" viewBox="0 0 7 9"><rect x="0.6" y="0.8" width="1.8" height="5" rx="0.8" fill="#f4f7fc"/><rect x="0.8" y="6.4" width="1.4" height="1.6" fill="#f4f7fc"/></svg>
<svg style="left:-0.8px;top:255.85000000000002px" width="8.2" height="10.4" viewBox="0 0 7 9"><circle cx="1.4" cy="4.5" r="3.7" fill="none" stroke="#f4f7fc" stroke-width="0.9"/></svg>
<svg style="left:-0.8px;top:268.45px" width="8.2" height="10.4" viewBox="0 0 7 9"><circle cx="2" cy="2.6" r="1.9" fill="#f4f7fc"/><path d="M-1.5 8.4 Q-1.2 4.8 2 4.8 Q5.4 4.8 5.6 8.4 Z" fill="#f4f7fc"/></svg>
<svg style="left:-0.8px;top:281.0px" width="8.2" height="10.4" viewBox="0 0 7 9"><circle cx="1.4" cy="4.5" r="3.7" fill="none" stroke="#f4f7fc" stroke-width="0.9"/><path d="M0.2 4.4 L1.4 5.6 L3.2 3" fill="none" stroke="#f4f7fc" stroke-width="0.6"/></svg>
<svg style="left:-0.8px;top:294.25px" width="8.2" height="10.4" viewBox="0 0 7 9"><circle cx="2" cy="2.6" r="1.9" fill="#f4f7fc"/><path d="M-1.5 8.4 Q-1.2 4.8 2 4.8 Q5.4 4.8 5.6 8.4 Z" fill="#f4f7fc"/></svg>
<svg style="left:-0.8px;top:331.8px" width="8.2" height="10.4" viewBox="0 0 7 9"><circle cx="1.4" cy="2.2" r="1.3" fill="#f4f7fc"/><path d="M-1 7.6 V4.4 H2.4 V6 H5 V7.6 Z" fill="#f4f7fc"/></svg>
<svg style="left:-0.8px;top:344.5px" width="8.2" height="10.4" viewBox="0 0 7 9"><rect x="-1" y="1.4" width="5.4" height="1.6" fill="#f4f7fc"/><rect x="-1" y="3.8" width="5.4" height="1.6" fill="#f4f7fc"/><rect x="-1" y="6.2" width="5.4" height="1.6" fill="#f4f7fc"/></svg>
<svg style="left:-0.8px;top:357.40000000000003px" width="8.2" height="10.4" viewBox="0 0 7 9"><circle cx="1.4" cy="2.2" r="1.3" fill="#f4f7fc"/><path d="M-1 7.6 V4.4 H2.4 V6 H5 V7.6 Z" fill="#f4f7fc"/></svg>
<svg style="left:-0.8px;top:370.2px" width="8.2" height="10.4" viewBox="0 0 7 9"><path d="M-0.6 3.4 H3.8 V6 Q3.6 7.6 1.6 7.6 Q-0.4 7.6 -0.6 6 Z" fill="#f4f7fc"/><path d="M3.8 4.2 Q5.4 4.2 5.2 5.4 Q5 6.2 3.8 6.2" fill="none" stroke="#f4f7fc" stroke-width="0.6"/></svg>
<svg style="left:-0.8px;top:383.05px" width="8.2" height="10.4" viewBox="0 0 7 9"><path d="M-1 2.2 H3 V4 H4.6 L5.4 5.4 V6.8 H-1 Z" fill="#f4f7fc"/><circle cx="0.8" cy="7.2" r="0.9" fill="#f4f7fc"/><circle cx="4" cy="7.2" r="0.9" fill="#f4f7fc"/></svg>
<svg style="left:94.9px;top:40.35px" width="2.8" height="3.2" viewBox="0 0 2.8 3.2"><path d="M0.3 1.5 L1.4 0.4 L2.5 1.5 M0.3 2.9 L1.4 1.8 L2.5 2.9" fill="none" stroke="#e8eef8" stroke-width="0.55"/></svg>
<svg style="left:94.9px;top:115.2px" width="2.8" height="3.2" viewBox="0 0 2.8 3.2"><path d="M0.3 0.4 L1.4 1.5 L2.5 0.4 M0.3 1.8 L1.4 2.9 L2.5 1.8" fill="none" stroke="#e8eef8" stroke-width="0.55"/></svg>
<svg style="left:94.9px;top:127.9px" width="2.8" height="3.2" viewBox="0 0 2.8 3.2"><path d="M0.3 1.5 L1.4 0.4 L2.5 1.5 M0.3 2.9 L1.4 1.8 L2.5 2.9" fill="none" stroke="#e8eef8" stroke-width="0.55"/></svg>
<svg style="left:94.9px;top:193.65px" width="2.8" height="3.2" viewBox="0 0 2.8 3.2"><path d="M0.3 1.5 L1.4 0.4 L2.5 1.5 M0.3 2.9 L1.4 1.8 L2.5 2.9" fill="none" stroke="#e8eef8" stroke-width="0.55"/></svg>
<svg style="left:94.9px;top:259.55px" width="2.8" height="3.2" viewBox="0 0 2.8 3.2"><path d="M0.3 0.4 L1.4 1.5 L2.5 0.4 M0.3 1.8 L1.4 2.9 L2.5 1.8" fill="none" stroke="#e8eef8" stroke-width="0.55"/></svg>
<svg style="left:94.9px;top:272.15px" width="2.8" height="3.2" viewBox="0 0 2.8 3.2"><path d="M0.3 0.4 L1.4 1.5 L2.5 0.4 M0.3 1.8 L1.4 2.9 L2.5 1.8" fill="none" stroke="#e8eef8" stroke-width="0.55"/></svg>
<svg style="left:94.9px;top:284.7px" width="2.8" height="3.2" viewBox="0 0 2.8 3.2"><path d="M0.3 0.4 L1.4 1.5 L2.5 0.4 M0.3 1.8 L1.4 2.9 L2.5 1.8" fill="none" stroke="#e8eef8" stroke-width="0.55"/></svg>
<svg style="left:94.9px;top:297.95px" width="2.8" height="3.2" viewBox="0 0 2.8 3.2"><path d="M0.3 1.5 L1.4 0.4 L2.5 1.5 M0.3 2.9 L1.4 1.8 L2.5 2.9" fill="none" stroke="#e8eef8" stroke-width="0.55"/></svg>
<svg style="left:94.9px;top:335.5px" width="2.8" height="3.2" viewBox="0 0 2.8 3.2"><path d="M0.3 0.4 L1.4 1.5 L2.5 0.4 M0.3 1.8 L1.4 2.9 L2.5 1.8" fill="none" stroke="#e8eef8" stroke-width="0.55"/></svg>
<svg style="left:94.9px;top:348.2px" width="2.8" height="3.2" viewBox="0 0 2.8 3.2"><path d="M0.3 0.4 L1.4 1.5 L2.5 0.4 M0.3 1.8 L1.4 2.9 L2.5 1.8" fill="none" stroke="#e8eef8" stroke-width="0.55"/></svg>
<svg style="left:94.9px;top:361.1px" width="2.8" height="3.2" viewBox="0 0 2.8 3.2"><path d="M0.3 0.4 L1.4 1.5 L2.5 0.4 M0.3 1.8 L1.4 2.9 L2.5 1.8" fill="none" stroke="#e8eef8" stroke-width="0.55"/></svg>
<svg style="left:94.9px;top:373.9px" width="2.8" height="3.2" viewBox="0 0 2.8 3.2"><path d="M0.3 0.4 L1.4 1.5 L2.5 0.4 M0.3 1.8 L1.4 2.9 L2.5 1.8" fill="none" stroke="#e8eef8" stroke-width="0.55"/></svg>
<svg style="left:94.9px;top:386.75px" width="2.8" height="3.2" viewBox="0 0 2.8 3.2"><path d="M0.3 0.4 L1.4 1.5 L2.5 0.4 M0.3 1.8 L1.4 2.9 L2.5 1.8" fill="none" stroke="#e8eef8" stroke-width="0.55"/></svg>
<span class="t" style="left:-0.5px;top:4px;font-size:4.8px;font-weight:400;color:#7e7e7e;transform:scaleX(0.9387);">онсоль управления PERCo-S-20, Версия 3.9.8.2</span>
<span class="t" style="left:-1.5px;top:13px;font-size:4.9px;font-weight:400;color:#808080;transform:scaleX(0.9832);text-decoration:underline;text-decoration-color:#c4c4c4;text-decoration-thickness:0.5px;">йл</span>
<span class="t" style="left:10px;top:13px;font-size:4.9px;font-weight:400;color:#808080;transform:scaleX(1.0159);text-decoration:underline;text-decoration-color:#c4c4c4;text-decoration-thickness:0.5px;">Вид</span>
<span class="t" style="left:24.6px;top:13px;font-size:4.9px;font-weight:400;color:#808080;transform:scaleX(1.0362);text-decoration:underline;text-decoration-color:#c4c4c4;text-decoration-thickness:0.5px;">Разделы</span>
<span class="t" style="left:51px;top:13px;font-size:4.9px;font-weight:400;color:#808080;transform:scaleX(1.0376);text-decoration:underline;text-decoration-color:#c4c4c4;text-decoration-thickness:0.5px;">Помощь</span>
<span class="t" style="left:-1.5px;top:23px;font-size:5.3px;font-weight:400;color:#9a9a9a;transform:scaleX(1.0883);">Закончить сеанс</span>
<span class="t" style="left:59px;top:23px;font-size:5.3px;font-weight:400;color:#9a9a9a;transform:scaleX(1.0635);">Сохранить</span>
<span class="t" style="left:104px;top:23px;font-size:5.3px;font-weight:400;color:#9a9a9a;transform:scaleX(1.0840);">Обновить</span>
<span class="t" style="left:146.5px;top:23px;font-size:5.3px;font-weight:400;color:#9a9a9a;transform:scaleX(1.0535);">Назад</span>
<span class="t" style="left:179px;top:23px;font-size:5.3px;font-weight:400;color:#9a9a9a;transform:scaleX(1.0703);">Вперед</span>
<span class="t" style="left:220px;top:23px;font-size:5.3px;font-weight:400;color:#9a9a9a;transform:scaleX(1.0707);">История</span>
<span class="t" style="left:264.5px;top:23px;font-size:5.3px;font-weight:400;color:#9a9a9a;transform:scaleX(1.0586);">Справка</span>
<span class="t" style="left:302.5px;top:23px;font-size:5.3px;font-weight:400;color:#9a9a9a;transform:scaleX(1.0719);">Выход</span>
<span class="t" style="left:7px;top:40px;font-size:5.0px;font-weight:700;color:#fff;transform:scaleX(0.9984);">Администрирование</span>
<span class="t" style="left:7px;top:54px;font-size:4.7px;font-weight:400;color:#f1f5fb;transform:scaleX(1.0380);">Конфигуратор</span>
<span class="t" style="left:7px;top:63px;font-size:4.7px;font-weight:400;color:#f1f5fb;transform:scaleX(1.0372);">Конфигурация Mifare</span>
<span class="t" style="left:7px;top:73px;font-size:4.7px;font-weight:400;color:#f1f5fb;transform:scaleX(1.0254);">Помещения и мнемосхема</span>
<span class="t" style="left:7px;top:82px;font-size:4.7px;font-weight:400;color:#f1f5fb;transform:scaleX(1.0502);">Назначение прав доступа операторов</span>
<span class="t" style="left:7px;top:91px;font-size:4.7px;font-weight:400;color:#f1f5fb;transform:scaleX(1.0430);">Планировщик заданий</span>
<span class="t" style="left:7px;top:100px;font-size:4.7px;font-weight:400;color:#f1f5fb;transform:scaleX(1.0569);">Отчет по SMS</span>
<span class="t" style="left:7px;top:115px;font-size:5.0px;font-weight:700;color:#fff;transform:scaleX(1.0342);">Управление и события</span>
<span class="t" style="left:7px;top:127px;font-size:5.0px;font-weight:700;color:#fff;transform:scaleX(1.0515);">Персонал</span>
<span class="t" style="left:7px;top:142px;font-size:4.7px;font-weight:400;color:#f1f5fb;transform:scaleX(1.0240);text-decoration:underline;text-decoration-thickness:0.45px;text-decoration-color:#cfdcf0;">Сотрудники</span>
<span class="t" style="left:7px;top:151px;font-size:4.7px;font-weight:400;color:#f1f5fb;transform:scaleX(1.0597);">Графики работы</span>
<span class="t" style="left:7px;top:160px;font-size:4.7px;font-weight:400;color:#f1f5fb;transform:scaleX(1.0442);">Учетные данные</span>
<span class="t" style="left:7px;top:170px;font-size:4.7px;font-weight:400;color:#f1f5fb;transform:scaleX(1.0370);">Временная замена учетных данных</span>
<span class="t" style="left:7px;top:179px;font-size:4.7px;font-weight:400;color:#f1f5fb;transform:scaleX(1.0584);">Дизайнер пропусков</span>
<span class="t" style="left:7px;top:193px;font-size:5.0px;font-weight:700;color:#fff;transform:scaleX(1.0404);">Доступ</span>
<span class="t" style="left:7px;top:207px;font-size:4.7px;font-weight:400;color:#f1f5fb;transform:scaleX(1.0460);">Доступ сотрудников</span>
<span class="t" style="left:7px;top:216px;font-size:4.7px;font-weight:400;color:#f1f5fb;transform:scaleX(1.0444);">Автозамена параметров доступа</span>
<span class="t" style="left:7px;top:226px;font-size:4.7px;font-weight:400;color:#f1f5fb;transform:scaleX(1.0507);">Доступ посетителей</span>
<span class="t" style="left:7px;top:235px;font-size:4.7px;font-weight:400;color:#f1f5fb;transform:scaleX(1.0549);">Доступ в помещения</span>
<span class="t" style="left:7px;top:244px;font-size:4.7px;font-weight:400;color:#f1f5fb;transform:scaleX(1.0480);">Отчет о выданных идентификаторах</span>
<span class="t" style="left:7px;top:259px;font-size:5.0px;font-weight:700;color:#fff;transform:scaleX(1.0523);">Параметры доступа</span>
<span class="t" style="left:7px;top:272px;font-size:5.0px;font-weight:700;color:#fff;transform:scaleX(1.0117);">Дисциплина</span>
<span class="t" style="left:7px;top:284px;font-size:5.0px;font-weight:700;color:#fff;transform:scaleX(1.0520);">Учет рабочего времени</span>
<span class="t" style="left:7px;top:297px;font-size:5.0px;font-weight:700;color:#fff;transform:scaleX(0.9904);">Верификация</span>
<span class="t" style="left:7px;top:311px;font-size:4.7px;font-weight:400;color:#f1f5fb;transform:scaleX(0.9984);">Верификация</span>
<span class="t" style="left:7px;top:321px;font-size:4.7px;font-weight:400;color:#f1f5fb;transform:scaleX(1.0451);">Журнал верификации</span>
<span class="t" style="left:7px;top:335px;font-size:5.0px;font-weight:700;color:#fff;transform:scaleX(1.0494);">Пост наблюдения</span>
<span class="t" style="left:7px;top:348px;font-size:5.0px;font-weight:700;color:#fff;transform:scaleX(1.0655);">Заказ пропусков</span>
<span class="t" style="left:7px;top:361px;font-size:5.0px;font-weight:700;color:#fff;transform:scaleX(1.0462);">Прием посетителей</span>
<span class="t" style="left:7px;top:373px;font-size:5.0px;font-weight:700;color:#fff;transform:scaleX(1.0012);">Кафе</span>
<span class="t" style="left:7px;top:386px;font-size:5.0px;font-weight:700;color:#fff;transform:scaleX(0.9984);">АТП</span>
<span class="t" style="left:116px;top:34px;font-size:4.8px;font-weight:700;color:#fff;transform:scaleX(0.9554);">Сотрудники (Ознакомительный период: осталось 12 дн.)</span>
<span class="t" style="left:116.5px;top:43px;font-size:4.6px;font-weight:400;color:#000;transform:scaleX(0.9843);">Сотрудники</span>
<span class="t" style="left:367.5px;top:53px;font-size:4.6px;font-weight:700;color:#000;transform:scaleX(1.0303);">(не определено)</span>
<span class="t" style="left:140.3px;top:63px;font-size:4.5px;font-weight:400;color:#222;transform:scaleX(1.0021);">Таб. №</span>
<span class="t" style="left:185px;top:63px;font-size:4.5px;font-weight:400;color:#222;transform:scaleX(1.0057);">Сотрудник</span>
<span class="t" style="left:242.5px;top:63px;font-size:4.5px;font-weight:400;color:#222;transform:scaleX(0.9877);">Должность</span>
<span class="t" style="left:284px;top:63px;font-size:4.5px;font-weight:400;color:#222;transform:scaleX(0.9452);">Подразделение</span>
<span class="t" style="left:336px;top:63px;font-size:4.5px;font-weight:400;color:#222;transform:scaleX(0.9711);">График работы</span>
<span class="t" style="left:389px;top:63px;font-size:4.5px;font-weight:400;color:#222;transform:scaleX(0.9387);">Прием на работу</span>
<span class="t" style="left:117.5px;top:70px;font-size:4.5px;font-weight:400;color:#000;transform:scaleX(1.0000);">1</span>
<span class="t" style="left:139.5px;top:70px;font-size:4.5px;font-weight:400;color:#000;transform:scaleX(0.8989);">1234567890</span>
<span class="t" style="left:229.2px;top:70px;font-size:4.5px;font-weight:400;color:#000;transform:scaleX(0.9594);">(не определена)</span>
<span class="t" style="left:281px;top:70px;font-size:4.5px;font-weight:400;color:#000;transform:scaleX(0.9448);">(не определено)</span>
<span class="t" style="left:385.3px;top:70px;font-size:4.5px;font-weight:400;color:#000;transform:scaleX(0.9631);">03.06.2021</span>
<span class="t" style="left:118.3px;top:218px;font-size:4.5px;font-weight:400;color:#444;transform:scaleX(1.0000);">i.</span>
<span class="t" style="left:116.2px;top:237px;font-size:4.5px;font-weight:400;color:#000;transform:scaleX(0.9687);">Таб. №</span>
<span class="t" style="left:152.1px;top:237px;font-size:4.5px;font-weight:400;color:#000;transform:scaleX(0.9149);">1234567890</span>
<span class="t" style="left:116.2px;top:249px;font-size:4.5px;font-weight:400;color:#000;transform:scaleX(0.8791);">Фамилия</span>
<span class="t" style="left:116.2px;top:260px;font-size:4.5px;font-weight:400;color:#000;transform:scaleX(0.7986);">Имя</span>
<span class="t" style="left:116.2px;top:271px;font-size:4.5px;font-weight:400;color:#000;transform:scaleX(0.9508);">Отчество</span>
<span class="t" style="left:116.2px;top:282px;font-size:4.5px;font-weight:400;color:#000;transform:scaleX(0.9107);">Прием на работу</span>
<span class="t" style="left:151.2px;top:282px;font-size:4.5px;font-weight:400;color:#000;transform:scaleX(0.9853);">03.06.2021</span>
<span class="t" style="left:120.25px;top:292px;font-size:4.5px;font-weight:400;color:#000;transform:scaleX(0.9660);">Учетные данные</span>
<span class="t" style="left:118.3px;top:302px;font-size:4.5px;font-weight:400;color:#000;transform:scaleX(0.9178);">Подразделение</span>
<span class="t" style="left:519.6px;top:302px;font-size:4.5px;font-weight:700;color:#333;transform:scaleX(1.0000);">...</span>
<span class="t" style="left:167.2px;top:302px;font-size:4.5px;font-weight:400;color:#000;transform:scaleX(0.9565);">(не определено)</span>
<span class="t" style="left:118.3px;top:313px;font-size:4.5px;font-weight:400;color:#000;transform:scaleX(0.9174);">Должность</span>
<span class="t" style="left:519.6px;top:314px;font-size:4.5px;font-weight:700;color:#333;transform:scaleX(1.0000);">...</span>
<span class="t" style="left:167.2px;top:313px;font-size:4.5px;font-weight:400;color:#000;transform:scaleX(0.9565);">(не определена)</span>
<span class="t" style="left:118.3px;top:324px;font-size:4.5px;font-weight:400;color:#000;transform:scaleX(0.9555);">График работы</span>
<span class="t" style="left:519.6px;top:325px;font-size:4.5px;font-weight:700;color:#333;transform:scaleX(1.0000);">...</span>
<span class="t" style="left:118.3px;top:335px;font-size:4.5px;font-weight:400;color:#000;transform:scaleX(0.9474);">Учетные данные</span>
<span class="t" style="left:118.3px;top:340px;font-size:4.5px;font-weight:400;color:#000;transform:scaleX(0.9890);">действуют с:</span>
<span class="t" style="left:167.2px;top:337px;font-size:4.5px;font-weight:400;color:#000;transform:scaleX(0.9631);">03.06.2021</span>
<span class="t" style="left:532.9px;top:246px;font-size:4.4px;font-weight:400;color:#000;transform:scaleX(0.9594);">Фотография</span>
<span class="t" style="left:565.1px;top:246px;font-size:4.4px;font-weight:400;color:#000;transform:scaleX(0.9700);">Документ</span>
<span class="t" style="left:134.6px;top:386px;font-size:4.5px;font-weight:400;color:#000;transform:scaleX(0.8134);">OK</span>
<span class="t" style="left:172.6px;top:386px;font-size:4.5px;font-weight:400;color:#000;transform:scaleX(0.9161);">Отмена</span>
<span class="t" style="left:211.6px;top:386px;font-size:4.5px;font-weight:400;color:#000;transform:scaleX(1.0038);">Назначить доступ</span>
<span class="t" style="left:267.8px;top:386px;font-size:4.5px;font-weight:400;color:#000;transform:scaleX(0.8790);">Основание</span>
<span class="t" style="left:346.4px;top:385px;font-size:4.5px;font-weight:400;color:#000;transform:scaleX(0.9463);">Имя входа в Active Directory</span>
<span class="t" style="left:-0.5px;top:400px;font-size:4.5px;font-weight:400;color:#000;transform:scaleX(1.3913);">к:</span>
<span class="t" style="left:12.6px;top:400px;font-size:4.5px;font-weight:700;color:#000;transform:scaleX(0.8399);">SUPPORTDOM7</span>
<span class="t" style="left:63.2px;top:400px;font-size:4.5px;font-weight:400;color:#000;transform:scaleX(0.9589);">Пользователь:</span>
<span class="t" style="left:106.6px;top:400px;font-size:4.5px;font-weight:400;color:#000;transform:scaleX(0.8834);">ADMIN (admin)</span>
<span class="t" style="left:203.2px;top:400px;font-size:4.5px;font-weight:400;color:#000;transform:scaleX(0.9558);">Статус:</span>
<span class="t" style="left:226px;top:400px;font-size:4.5px;font-weight:700;color:#000;transform:scaleX(0.9871);">Раздел активирован</span>
</div></body></html>
